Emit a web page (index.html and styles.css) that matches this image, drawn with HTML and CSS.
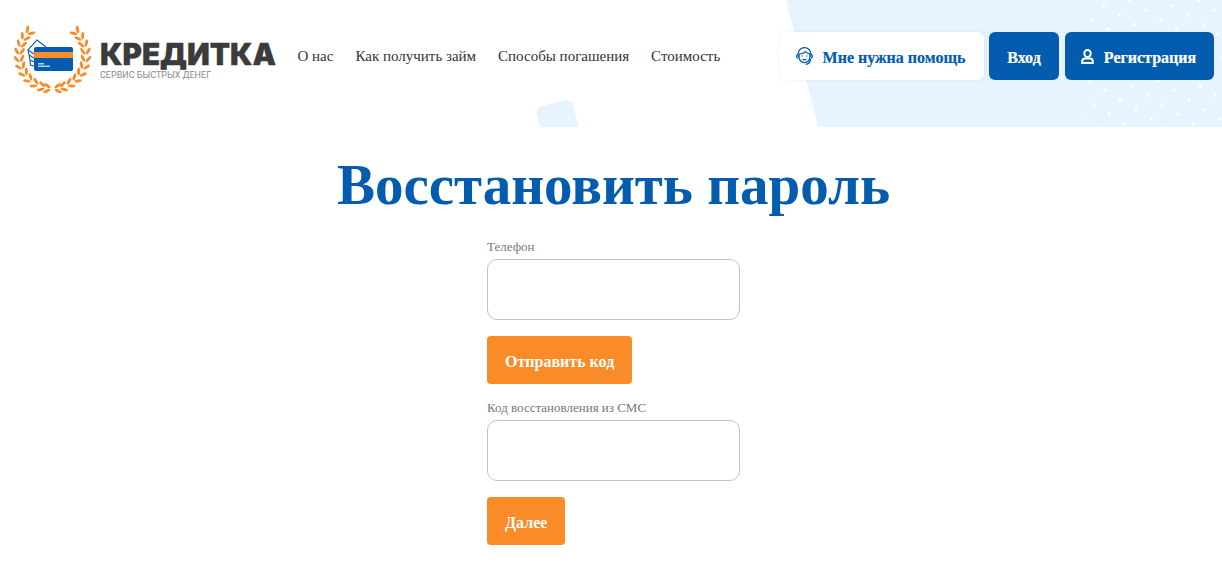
FILE: index.html
```html
<!DOCTYPE html>
<html lang="ru">
<head>
<meta charset="utf-8">
<title>Восстановить пароль</title>
<link rel="stylesheet" href="styles.css">
</head>
<body>
<header class="site-header">
  <svg class="header-bg" width="1222" height="127" viewBox="0 0 1222 127" aria-hidden="true">
    <defs>
      <pattern id="dots" width="27" height="24" patternUnits="userSpaceOnUse" patternTransform="rotate(-10)">
        <circle cx="6" cy="5" r="1.800" fill="#fff"/>
        <circle cx="19.500" cy="17" r="1.800" fill="#fff"/>
      </pattern>
      <linearGradient id="fade" x1="0" y1="0" x2="1" y2="0">
        <stop offset="0" stop-color="#fff" stop-opacity="0"/>
        <stop offset=".15" stop-color="#fff" stop-opacity="1"/>
        <stop offset="1" stop-color="#fff" stop-opacity="1"/>
      </linearGradient>
      <mask id="dotmask" maskUnits="userSpaceOnUse" x="1075" y="0" width="147" height="127"><rect x="1075" y="0" width="147" height="127" fill="url(#fade)"/></mask>
    </defs>
    <rect x="540" y="103" width="37" height="40" rx="6" fill="#e7f3ff" transform="rotate(-15 558 123)"/>
    <polygon points="786,0 1222,0 1222,127 818,127" fill="#e7f3ff"/>
    <rect x="1075" y="0" width="147" height="127" fill="url(#dots)" mask="url(#dotmask)"/>
  </svg>

  <a class="logo" href="#">
    <svg class="logo-mark" width="78" height="68" viewBox="0 0 78 68" aria-hidden="true">
      <defs>
        <g id="leaf">
          <ellipse cx="-2" cy="-36" rx="3.800" ry="1.500" transform="rotate(32 -2 -36)" fill="#f98b28"/>
          <ellipse cx="-2" cy="-30.500" rx="3.800" ry="1.500" transform="rotate(-32 -2 -30.500)" fill="#f98b28"/>
        </g>
        <g id="branch">
          <use href="#leaf" transform="rotate(47)"/><use href="#leaf" transform="rotate(60)"/>
          <use href="#leaf" transform="rotate(73)"/><use href="#leaf" transform="rotate(86)"/>
          <use href="#leaf" transform="rotate(99)"/><use href="#leaf" transform="rotate(112)"/>
          <use href="#leaf" transform="rotate(125)"/><use href="#leaf" transform="rotate(138)"/>
          <use href="#leaf" transform="rotate(151)"/><use href="#leaf" transform="rotate(164)"/>
          <use href="#leaf" transform="rotate(174)"/>
        </g>
      </defs>
      <g transform="translate(38.500 30.500)">
        <use href="#branch"/>
        <use href="#branch" transform="scale(-1 1)"/>
      </g>
      <path d="M32 22 23 15 14 25 20 29M14 25l1 5 5 3M15 30l1 5 4 2M16 35l.5 5 3.500 1" fill="none" stroke="#035cad" stroke-width="1.100"/>
      <rect x="20" y="22" width="39" height="24" rx="2" fill="#035cad"/>
      <rect x="20" y="27" width="39" height="6" fill="#f98b28"/>
      <rect x="24" y="38" width="6" height="1.500" fill="#b8d2ea"/>
      <rect x="24" y="40.500" width="12" height="1.500" fill="#b8d2ea"/>
    </svg>
    <span class="logo-text">
      <span class="logo-name">КРЕДИТКА</span>
      <span class="logo-tag">СЕРВИС БЫСТРЫХ ДЕНЕГ</span>
    </span>
  </a>

  <nav class="main-nav">
    <a href="#">О нас</a>
    <a href="#">Как получить займ</a>
    <a href="#">Способы погашения</a>
    <a href="#">Стоимость</a>
  </nav>

  <div class="header-actions">
    <a class="btn btn-help" href="#">
      <svg width="19" height="20" viewBox="0 0 20 20" fill="none" stroke="#035cad" stroke-width="1.300" aria-hidden="true">
        <path d="M3.600 11.500C2 7 4.500 1.200 10 1.200s8 5.800 6.400 10.300"/>
        <path d="M3.500 7.800c3 .4 5.500-.4 7.500-2.300 1 1.400 3 2.300 5.500 2.300"/>
        <path d="M4.300 8v3.300c0 3 2.600 5.700 5.700 5.700s5.700-2.700 5.700-5.700V8"/>
        <path d="M2.900 8.200c-1.500.4-1.500 3.800 0 4.200M17.100 8.200c1.500.4 1.500 3.800 0 4.200"/>
        <path d="M7 10h1.400M11.600 10H13M8 13.300c1.200.8 2.800.8 4 0"/>
        <path d="M16.400 13c-.3 3.800-2.400 5.600-5.200 5.800"/>
      </svg>
      <span>Мне нужна помощь</span>
    </a>
    <a class="btn btn-primary btn-login" href="#"><span>Вход</span></a>
    <a class="btn btn-primary btn-register" href="#">
      <svg width="13" height="15" viewBox="0 0 13 15" fill="none" stroke="#fff" stroke-width="2" aria-hidden="true">
        <rect x="3.300" y="1" width="6.400" height="7" rx="3.200"/>
        <path d="M1.200 14v-1.500c0-1.700 1.300-3 3-3h4.600c1.700 0 3 1.300 3 3V14z"/>
      </svg>
      <span>Регистрация</span>
    </a>
  </div>
</header>

<main class="page">
  <h1 class="page-title">Восстановить пароль</h1>
  <form class="recover-form">
    <div class="field">
      <label for="phone">Телефон</label>
      <input id="phone" type="text">
    </div>
    <button class="btn-submit" type="button">Отправить код</button>
    <div class="field">
      <label for="code">Код восстановления из СМС</label>
      <input id="code" type="text">
    </div>
    <button class="btn-submit" type="button">Далее</button>
  </form>
</main>
</body>
</html>
```

FILE: styles.css
```css
* { box-sizing: border-box; }

html, body {
  margin: 0;
  padding: 0;
  background: #fff;
  overflow: hidden;
}

body {
  font-family: "Liberation Serif", "Times New Roman", serif;
  color: #333;
}

a { text-decoration: none; color: inherit; }

.site-header {
  position: relative;
  height: 127px;
  overflow: hidden;
  display: flex;
  align-items: center;
  padding: 0 8px 15px 14px;
}

.header-bg {
  position: absolute;
  top: 0;
  left: 0;
}

.logo,
.main-nav,
.header-actions { position: relative; }

.logo {
  display: flex;
  align-items: center;
  gap: 8px;
  width: 262px;
  flex: none;
}

.logo-mark { flex: none; margin-top: 6px; }

.logo-text {
  display: flex;
  flex-direction: column;
  gap: 3px;
  margin-top: 10px;
}

.logo-name {
  font-family: Inter, Roboto, "Liberation Sans", sans-serif;
  font-weight: 900;
  font-size: 29.600px;
  line-height: 26px;
  color: #3b3b3b;
  -webkit-text-stroke: .3px #3b3b3b;
  white-space: nowrap;
}

.logo-tag {
  font-family: Roboto, "Liberation Sans", sans-serif;
  font-size: 9px;
  line-height: 11px;
  color: #8a8a8a;
  white-space: nowrap;
}

.main-nav {
  display: flex;
  gap: 22px;
  margin-left: 21.500px;
  font-size: 15px;
  color: #333;
}

.header-actions {
  display: flex;
  gap: 5px;
  margin-left: auto;
}

.btn {
  height: 48px;
  display: flex;
  align-items: center;
  justify-content: center;
  border-radius: 6px;
  font-size: 16px;
  font-weight: 700;
}

.btn span {
  margin-top: 3px;
  -webkit-text-stroke: .2px currentColor;
}

.btn-help {
  width: 204px;
  gap: 9px;
  padding-right: 4px;
  background: #fff;
  color: #035cad;
  box-shadow: 0 0 4px rgba(3, 92, 173, .08);
}

.btn-primary {
  background: #035cad;
  color: #fff;
}

.btn-login { width: 70px; }

.btn-register {
  width: 149px;
  gap: 10px;
  padding-right: 2px;
  margin-left: 1px;
}

.page {
  padding: 23px 0 0 5px;
}

.page-title {
  margin: 0;
  text-align: center;
  font-size: 57px;
  line-height: 70px;
  font-weight: 700;
  color: #035cad;
}

.recover-form {
  width: 253px;
  margin: 19px auto 0;
  display: flex;
  flex-direction: column;
  align-items: flex-start;
}

.field {
  width: 100%;
  display: flex;
  flex-direction: column;
}

.field label {
  font-size: 13px;
  line-height: 14px;
  padding-top: 1px;
  margin-bottom: 5px;
  color: #777;
}

.field input {
  width: 100%;
  height: 61px;
  border: 1px solid #c4c4c4;
  border-radius: 10px;
  background: #fff;
  outline: none;
}

.btn-submit {
  height: 48px;
  margin: 16px 0;
  padding: 3px 18px 0;
  border: 0;
  border-radius: 4px;
  background: #f98b28;
  color: #fff;
  font-family: inherit;
  font-size: 16px;
  font-weight: 700;
}
```
